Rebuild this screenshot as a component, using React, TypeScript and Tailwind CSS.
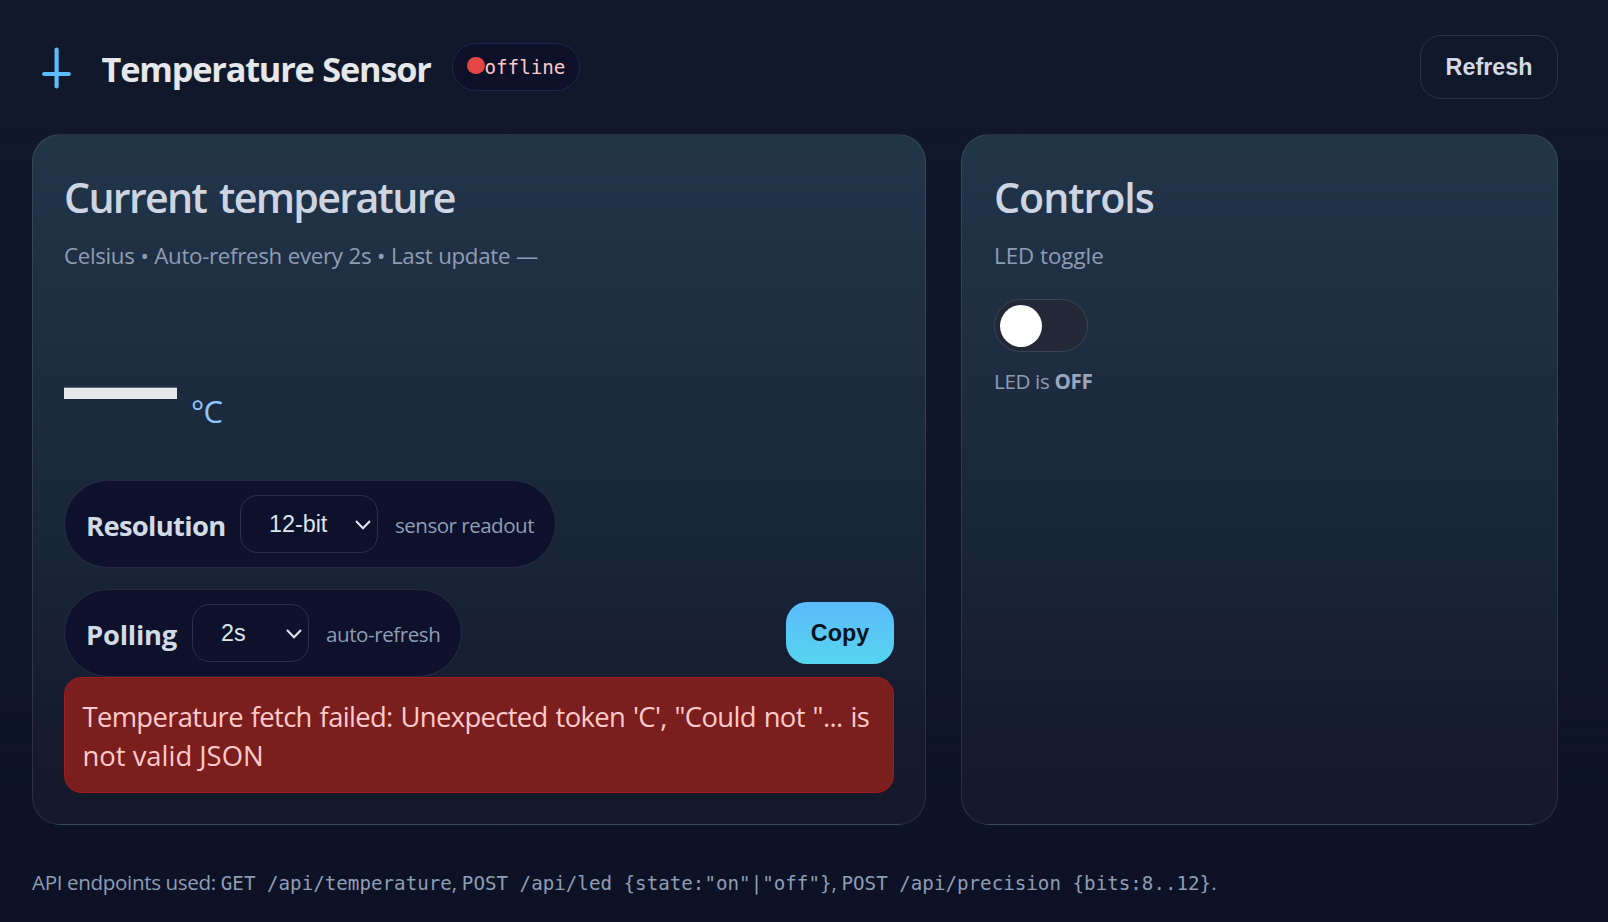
import { useState } from "react";

const card =
  "flex h-[691px] flex-col rounded-[28px] border border-white/10 bg-[linear-gradient(180deg,#213549_0%,#1e2d42_28%,#192539_60%,#151a2d_88%,#14182a_100%)] pt-[32px] pr-[31px]";
const sans = "font-['Open_Sans','Noto_Sans',sans-serif]";
const arial = "font-['Liberation_Sans',Arial,sans-serif]";
const mono = "font-['DejaVu_Sans_Mono',monospace] text-[19.2px] tracking-[0px]";

function Select({ value, options, className }: { value: string; options: string[]; className: string }) {
  const [v, setV] = useState(value);
  return (
    <div className={`relative h-[58px] ${className}`}>
      <select
        value={v}
        onChange={(e) => setV(e.target.value)}
        className={`${arial} h-full w-full appearance-none rounded-[17.5px] border border-[#2d304b] bg-[#0d112b] pl-[28px] text-[23.33px] text-[#dfe4ee] outline-none`}
      >
        {options.map((o) => (
          <option key={o}>{o}</option>
        ))}
      </select>
      <svg
        className="pointer-events-none absolute top-[24px] right-[6px]"
        width="18"
        height="12"
        viewBox="0 0 18 12"
        fill="none"
        stroke="#dfe4ee"
        strokeWidth="2.1"
      >
        <path d="M2 2 L9 9.2 L16 2" />
      </svg>
    </div>
  );
}

export default function App() {
  const [on, setOn] = useState(false);
  return (
    <div className={`${sans} min-h-[922px] bg-[linear-gradient(180deg,#11182a_0%,#10162a_50%,#0c1126_100%)] pt-[35px] pr-[50px] pl-8 text-[#e5e7eb]`}>
      <header className="mb-[35px] flex h-16 items-center">
        <svg width="49" height="49" viewBox="0 0 49 49" fill="none" stroke="#5bbcfb" strokeWidth="4.2" strokeLinecap="round">
          <path d="M24.6 6.6 V43.4 M12.2 31 H36.8" />
        </svg>
        <h1 className="ml-5 w-[351px] pt-[3px] pl-[0.5px] text-[34.3px] leading-[48px] font-bold tracking-[-1.2px] whitespace-nowrap [word-spacing:1px]">
          Temperature Sensor
        </h1>
        <div className="flex h-12 w-[128px] items-center rounded-full border border-[#1f2548] bg-[#0c1029] pl-[14px]">
          <span className="mb-[3px] size-[17.5px] shrink-0 rounded-full bg-[#e64545]" />
          <span className={`${mono} pt-[2px] text-[#fecaca]`}>offline</span>
        </div>
        <button className={`${arial} ml-auto h-16 w-[138px] rounded-[21px] border border-[#2c3144] text-[23.33px] font-bold text-[#d3dae6]`}>
          Refresh
        </button>
      </header>

      <main className="grid grid-cols-[894px_597px] gap-[35px]">
        <section className={`${card} pl-[31px]`}>
          <h2 className="text-[41.2px] leading-[61px] font-semibold tracking-[-1.7px] text-[#cdd5e3] [word-spacing:4px]">
            Current temperature
          </h2>
          <p className="mt-3 text-[22.3px] leading-8 tracking-[-0.32px] text-[#8f9db3] [word-spacing:0.4px]">
            Celsius • Auto-refresh every 2s • Last update —
          </p>
          <div className="mt-14 flex h-[114px] items-start gap-[14px]">
            <span className={`${arial} text-[113px] leading-[114px] font-bold`}>—</span>
            <span className="mt-[62px] text-[31px] leading-[42px] tracking-[-0.8px] text-[#93c5fd]">°C</span>
          </div>
          <div className="mt-[38px] flex h-[88px] w-[492px] items-center rounded-full border border-white/10 bg-[#0d112b] pl-[21px]">
            <label className="w-[154px] pt-[4px] text-[27.4px] font-bold tracking-[-0.68px] text-[#d3dae6]">Resolution</label>
            <Select value="12-bit" options={["9-bit", "10-bit", "11-bit", "12-bit"]} className="w-[138px]" />
            <span className="ml-[17px] pt-[2px] text-[20.6px] tracking-[-0.53px] text-[#8f9db3]">sensor readout</span>
          </div>
          <div className="mt-[21px] flex h-[88px] items-center justify-between">
            <div className="flex h-[88px] w-[398px] items-center rounded-full border border-white/10 bg-[#0d112b] pl-[21px]">
              <label className="w-[106px] pt-[4px] text-[27.4px] font-bold tracking-[-0.25px] text-[#d3dae6]">Polling</label>
              <Select value="2s" options={["1s", "2s", "5s", "10s"]} className="w-[117px]" />
              <span className="ml-[17px] pt-[2px] text-[20.6px] tracking-[-0.45px] text-[#8f9db3]">auto-refresh</span>
            </div>
            <button className={`${arial} h-[62px] w-[108px] rounded-[21px] bg-[linear-gradient(180deg,#5bbafb,#56d5ee)] text-[23.33px] font-bold text-[#07131c]`}>
              Copy
            </button>
          </div>
          <div className="h-[116px] rounded-[17.5px] border border-[#a31b1b] bg-[#7b1e1e] px-[17.5px] pt-[19px] text-[27.4px] leading-[39.2px] text-[#fecaca]">
            <div className="tracking-[-0.65px] whitespace-nowrap [word-spacing:1.4px]">
              Temperature fetch failed: Unexpected token 'C', "Could not "... is
            </div>
            <div>not valid JSON</div>
          </div>
        </section>

        <section className={`${card} pl-[32px]`}>
          <h2 className="text-[41.2px] leading-[61px] font-semibold tracking-[-1.05px] text-[#cdd5e3]">Controls</h2>
          <p className="mt-3 text-[22.3px] leading-8 text-[#8f9db3]">LED toggle</p>
          <button
            role="switch"
            aria-checked={on}
            aria-label="LED toggle"
            onClick={() => setOn(!on)}
            className="mt-[27px] flex h-[53px] w-[94px] items-center rounded-full border border-[#3b4453] bg-[#222835] px-[5px]"
          >
            <span className={on ? "ml-auto size-[42px] rounded-full bg-white" : "size-[42px] rounded-full bg-white"} />
          </button>
          <p className="mt-[14px] text-[20.6px] leading-[30px] tracking-[-0.35px] text-[#8f9db3]">
            LED is <b className="font-bold text-[#9aa6ba]">{on ? "ON" : "OFF"}</b>
          </p>
        </section>
      </main>

      <footer className="mt-[42px] text-[20.6px] leading-[30px] tracking-[-0.36px] whitespace-nowrap text-[#8f9db3]">
        API endpoints used: <code className={mono}>GET /api/temperature</code>,{" "}
        <code className={mono}>POST /api/led {'{state:"on"|"off"}'}</code>,{" "}
        <code className={mono}>POST /api/precision {"{bits:8..12}"}</code>.
      </footer>
    </div>
  );
}
